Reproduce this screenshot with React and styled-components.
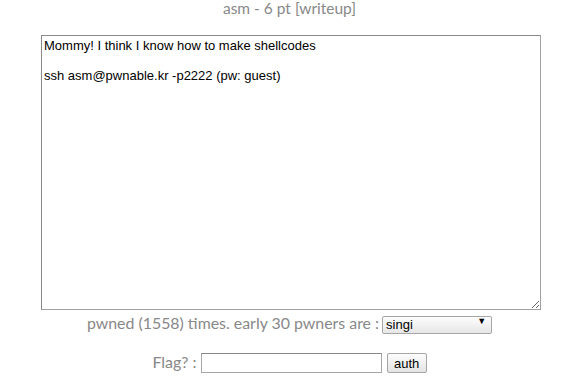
import React from 'react'
import styled, { createGlobalStyle } from 'styled-components'

const Global = createGlobalStyle`
body {
  margin: 0;
  background: #fff;
  font-family: Lato, "Liberation Sans", sans-serif;
}
`

export const Page = styled.div`
display: flex;
flex-direction: column;
align-items: center;
color: #888;
`

export const Title = styled.div`
font-size: 15.5px;
line-height: 16px;
height: 16px;
color: #888;
`

export const Box = styled.textarea`
box-sizing: border-box;
width: 500px;
height: 275px;
margin-top: 19px;
margin-left: 3px;
padding: 2px;
border: 1px solid #a0a0a0;
border-top-color: #8a8a8a;
border-left-color: #8a8a8a;
font-family: "Liberation Sans", Arial, sans-serif;
font-size: 13px;
line-height: 15px;
color: #000;
resize: both;
outline: none;
`

export const Row = styled.div`
display: flex;
align-items: baseline;
font-size: ${p => p.size || 16}px;
line-height: 20px;
color: #888;
margin-top: ${p => p.top}px;
`

export const SelectWrap = styled.span`
position: relative;
display: inline-block;
margin-left: 3px;
`

export const Select = styled.select`
appearance: none;
width: 110px;
height: 18px;
box-sizing: border-box;
border: 1px solid #a6a6a6;
border-radius: 2px;
background: linear-gradient(#fdfdfd, #e6e6e6);
font-family: "Liberation Sans", Arial, sans-serif;
font-size: 13px;
color: #000;
padding: 0 0 0 3px;
`

export const Arrow = styled.span`
position: absolute;
right: 6px;
top: 3px;
font-size: 9px;
line-height: 10px;
color: #000;
pointer-events: none;
`

export const Input = styled.input`
box-sizing: border-box;
width: 181px;
height: 20px;
margin-left: 4px;
border: 1px solid #a6a6a6;
border-top-color: #8a8a8a;
padding: 1px 2px;
font-size: 13px;
`

export const Button = styled.button`
box-sizing: border-box;
width: 40px;
height: 20px;
margin-left: 5px;
border: 1px solid #a6a6a6;
border-radius: 2px;
background: linear-gradient(#fcfcfc, #e4e4e4);
font-family: "Liberation Sans", Arial, sans-serif;
font-size: 13px;
color: #000;
padding: 0;
`

export default function App() {
  return (
    <Page>
      <Global />
      <Title>asm - 6 pt [writeup]</Title>
      <Box
        readOnly
        defaultValue={'Mommy! I think I know how to make shellcodes\n\nssh asm@pwnable.kr -p2222 (pw: guest)'}
      />
      <Row top={3} size={15.9}>
        pwned (1558) times. early 30 pwners are :
        <SelectWrap>
          <Select defaultValue="singi">
            <option>singi</option>
          </Select>
          <Arrow>▼</Arrow>
        </SelectWrap>
      </Row>
      <Row top={18}>
        Flag? :
        <Input type="text" />
        <Button>auth</Button>
      </Row>
    </Page>
  )
}
